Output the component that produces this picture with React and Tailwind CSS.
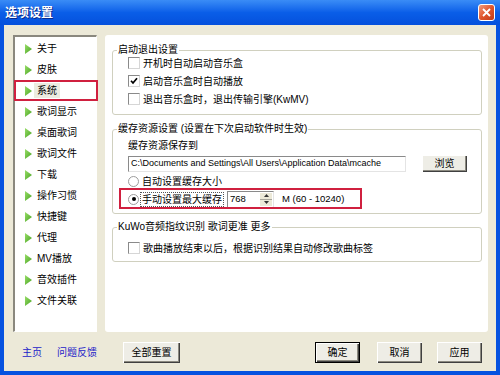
import React from 'react'

const menuItems = [
  '关于',
  '皮肤',
  '系统',
  '歌词显示',
  '桌面歌词',
  '歌词文件',
  '下载',
  '操作习惯',
  '快捷键',
  '代理',
  'MV播放',
  '音效插件',
  '文件关联',
]

function Arrow() {
  return (
    <svg width="7" height="10" viewBox="0 0 7 10" className="shrink-0">
      <defs>
        <linearGradient id="arrowGreen" x1="0" y1="0" x2="1" y2="1">
          <stop offset="0" stopColor="#9ade6a" />
          <stop offset="1" stopColor="#45a21f" />
        </linearGradient>
      </defs>
      <polygon points="0,0 7,5 0,10" fill="url(#arrowGreen)" />
    </svg>
  )
}

function CheckBox({ checked }) {
  return (
    <span className="flex h-[12px] w-[12px] shrink-0 items-center justify-center border border-t-[#8a8a8a] border-l-[#8a8a8a] border-r-[#d6d6d6] border-b-[#d6d6d6] bg-white">
      {checked && (
        <svg width="8" height="8" viewBox="0 0 8 8">
          <path d="M1 3.8 L3 6 L7 1.2" stroke="#000" strokeWidth="1.7" fill="none" />
        </svg>
      )}
    </span>
  )
}

function Radio({ checked }) {
  return (
    <span className="flex h-[11px] w-[11px] shrink-0 items-center justify-center rounded-full border border-[#9c9c9c] bg-white">
      {checked && <span className="h-[4px] w-[4px] rounded-full bg-black" />}
    </span>
  )
}

function Btn({ children, className, isDefault }) {
  return (
    <button
      className={
        'flex items-center justify-center bg-[#eeede6] text-[10px] text-black shadow-[inset_1px_1px_0_#ffffff,inset_-1px_-1px_0_#404040,inset_-2px_-2px_0_#8c8a80] ' +
        (isDefault ? 'border border-black ' : '') +
        className
      }
    >
      {children}
    </button>
  )
}

function Group({ title, className, children }) {
  return (
    <fieldset className={'rounded-[3px] border border-[#d0d0bf] ' + className}>
      <legend className="ml-[4px] px-[1px] text-[10px] leading-[14px] text-black">
        {title}
      </legend>
      {children}
    </fieldset>
  )
}

export default function App() {
  return (
    <div className="flex h-[375px] w-[500px] flex-col bg-[#0652e0] font-['Liberation_Sans','Noto_Sans_CJK_SC',sans-serif] text-[10px] text-black">
      {/* title bar */}
      <div className="flex h-[25px] shrink-0 items-center bg-linear-to-b from-[#3a8cf6] via-[#0a5ee8] to-[#0550dc] pl-[5px]">
        <span className="text-[12px] font-bold text-white [text-shadow:1px_1px_0_#0a2a8a]">
          选项设置
        </span>
        <div className="mr-[5px] ml-auto flex h-[17px] w-[17px] items-center justify-center rounded-[3px] border border-white bg-linear-to-br from-[#f09a7a] via-[#e0562c] to-[#c03a18]">
          <svg width="9" height="9" viewBox="0 0 9 9">
            <path d="M1 1 L8 8 M8 1 L1 8" stroke="#fff" strokeWidth="1.8" />
          </svg>
        </div>
      </div>

      {/* body */}
      <div className="mx-[4px] mb-[4px] flex flex-1 flex-col bg-[#ece9d8] pt-[10px] pr-[8px] pl-[9px]">
        <div className="flex h-[297px] gap-[8px]">
          {/* left menu */}
          <div className="w-[84px] border-t-2 border-r border-b border-l-2 border-t-[#8a887e] border-r-white border-b-white border-l-[#8a887e] bg-white pt-[1px]">
            {menuItems.map((item) => (
              <div key={item} className="relative flex h-[21px] items-center gap-[5px] pl-[10px]">
                <Arrow />
                {item === '系统' ? (
                  <span className="-ml-[3px] bg-[#ecebe0] px-[3px] leading-[15px]">{item}</span>
                ) : (
                  <span>{item}</span>
                )}
                {item === '系统' && (
                  <div className="absolute top-0 -right-[2px] bottom-0 -left-[1px] border-2 border-[#d0203f]" />
                )}
              </div>
            ))}
          </div>

          {/* right panel */}
          <div className="w-[383px] rounded-[3px] bg-white pt-[8px] pr-[6px] pl-[7px]">
            <Group title="启动退出设置">
              <div className="-mt-[3px] pb-[6px] pl-[15px]">
                <div className="flex h-[18px] items-center gap-[3px]">
                  <CheckBox />
                  <span>开机时自动启动音乐盒</span>
                </div>
                <div className="flex h-[18px] items-center gap-[3px]">
                  <CheckBox checked />
                  <span>启动音乐盒时自动播放</span>
                </div>
                <div className="flex h-[18px] items-center gap-[3px]">
                  <CheckBox />
                  <span>退出音乐盒时，退出传输引擎(KwMV)</span>
                </div>
              </div>
            </Group>

            <Group title="缓存资源设置 (设置在下次启动软件时生效)" className="mt-[7px]">
              <div className="pb-[5px] pl-[15px]">
                <div className="mt-[1px] flex h-[16px] items-center">缓存资源保存到</div>
                <div className="mt-[2px] flex h-[17px] items-center">
                  <div className="flex h-[16px] w-[278px] items-center overflow-hidden border border-t-[#8a8a8a] border-r-[#e4e4e4] border-b-[#e4e4e4] border-l-[#8a8a8a] bg-white pl-[2px] text-[9px] whitespace-nowrap">
                    C:\Documents and Settings\All Users\Application Data\mcache
                  </div>
                  <Btn className="ml-[16px] h-[17px] w-[45px]">浏览</Btn>
                </div>
                <div className="mt-[2px] flex h-[15px] items-center gap-[3px]">
                  <Radio />
                  <span>自动设置缓存大小</span>
                </div>
                <div className="relative mt-[1px] flex h-[18px] items-center gap-[1px]">
                  <Radio checked />
                  <span className="border border-dotted border-[#555] px-[1px] leading-[13px]">
                    手动设置最大缓存
                  </span>
                  <div className="ml-[2px] flex h-[17px] w-[47px] items-center border border-t-[#8a8a8a] border-r-[#e4e4e4] border-b-[#e4e4e4] border-l-[#8a8a8a] bg-white pl-[2px] text-[9.5px]">
                    <span className="flex-1">768</span>
                    <div className="mr-[1px] flex h-[13px] w-[12px] flex-col bg-[#ece9d8]">
                      <div className="flex flex-1 items-center justify-center border-b border-[#a8a69c]">
                        <svg width="5" height="3" viewBox="0 0 5 3">
                          <polygon points="0,3 2.5,0 5,3" fill="#333" />
                        </svg>
                      </div>
                      <div className="flex flex-1 items-center justify-center">
                        <svg width="5" height="3" viewBox="0 0 5 3">
                          <polygon points="0,0 2.5,3 5,0" fill="#333" />
                        </svg>
                      </div>
                    </div>
                  </div>
                  <span className="ml-[7px] text-[9.5px]">M (60 - 10240)</span>
                  <div className="absolute -top-[2px] -left-[9px] h-[21px] w-[243px] border-2 border-[#d0203f]" />
                </div>
              </div>
            </Group>

            <Group title="KuWo音频指纹识别 歌词更准 更多" className="mt-[6px]">
              <div className="pb-[4px] pl-[15px]">
                <div className="mt-[5px] flex h-[18px] items-center gap-[3px]">
                  <CheckBox />
                  <span>歌曲播放结束以后，根据识别结果自动修改歌曲标签</span>
                </div>
              </div>
            </Group>
          </div>
        </div>

        {/* bottom bar */}
        <div className="mt-[10px] flex h-[21px] items-center">
          <span className="ml-[9px] text-[#1c1cc8]">主页</span>
          <span className="ml-[15px] text-[#1c1cc8]">问题反馈</span>
          <Btn className="ml-[26px] h-[21px] w-[57px]">全部重置</Btn>
          <Btn className="ml-auto h-[21px] w-[45px]" isDefault>
            确定
          </Btn>
          <Btn className="ml-[17px] h-[21px] w-[45px]">取消</Btn>
          <Btn className="mr-[6px] ml-[15px] h-[21px] w-[45px]">应用</Btn>
        </div>
      </div>
    </div>
  )
}
